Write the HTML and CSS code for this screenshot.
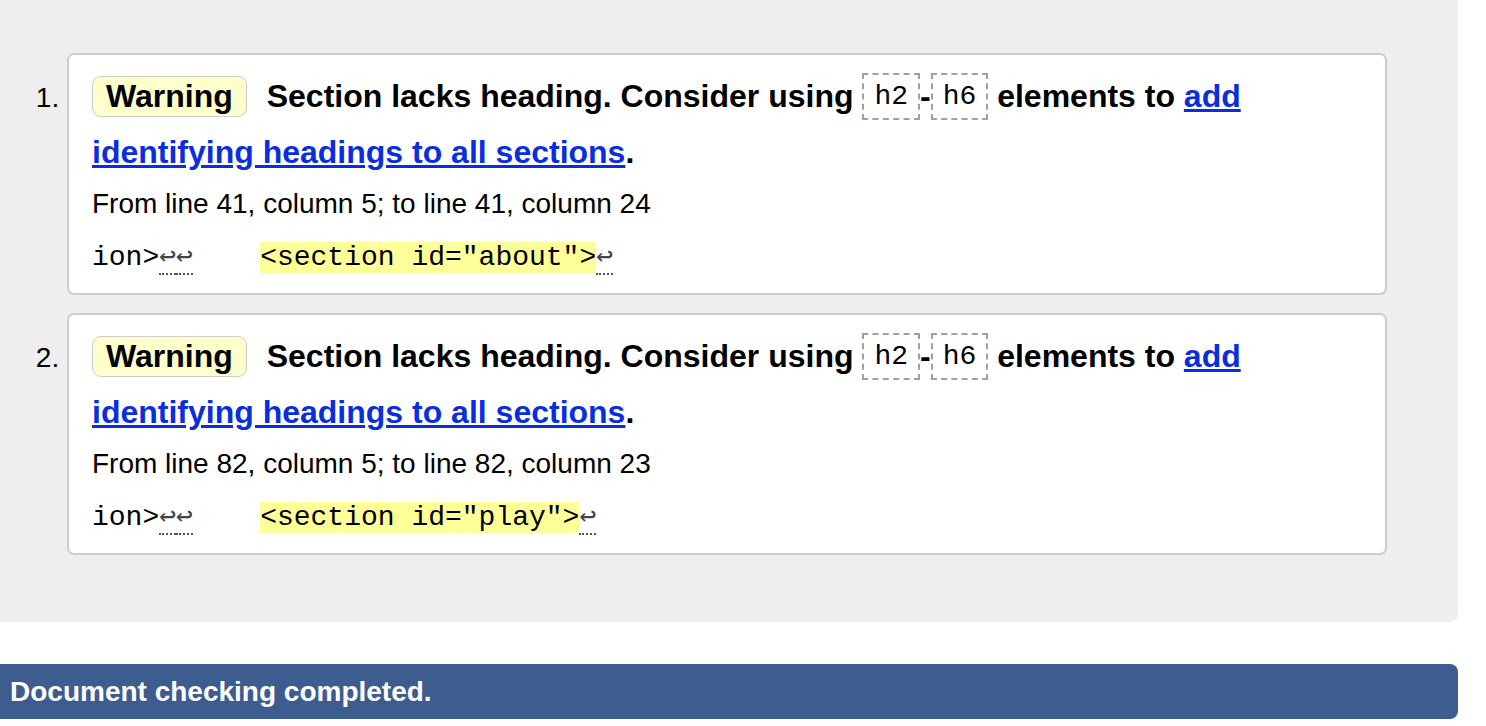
FILE: index.html
```html
<!DOCTYPE html>
<html lang="en">
<head>
<meta charset="utf-8">
<title>Nu Html Checker</title>
<link rel="stylesheet" href="styles.css">
</head>
<body>
<div class="results">
  <ol class="messages">
    <li class="warning">
      <p class="message"><strong class="badge">Warning</strong> <span>Section lacks heading. Consider using <code>h2</code>-<code>h6</code> elements to <a href="#">add identifying headings to all sections</a>.</span></p>
      <p class="location">From line 41, column 5; to line 41, column 24</p>
      <p class="extract"><code>ion&gt;<span class="lf">↩</span><span class="lf">↩</span>    <b>&lt;section id="about"&gt;</b><span class="lf">↩</span></code></p>
    </li>
    <li class="warning">
      <p class="message"><strong class="badge">Warning</strong> <span>Section lacks heading. Consider using <code>h2</code>-<code>h6</code> elements to <a href="#">add identifying headings to all sections</a>.</span></p>
      <p class="location">From line 82, column 5; to line 82, column 23</p>
      <p class="extract"><code>ion&gt;<span class="lf">↩</span><span class="lf">↩</span>    <b>&lt;section id="play"&gt;</b><span class="lf">↩</span></code></p>
    </li>
  </ol>
</div>
<p class="done">Document checking completed.</p>
</body>
</html>
```

FILE: styles.css
```css
html, body {
  margin: 0;
  padding: 0;
  background: #fff;
}

body {
  font-family: "Liberation Sans", Arial, sans-serif;
  color: #000;
}

.results {
  width: 1458px;
  background: #eeeeee;
  padding: 53px 0 67px;
  border-radius: 0 0 8px 0;
}

.messages {
  margin: 0;
  padding: 0 71px 0 67px;
  list-style: decimal outside;
  font-size: 28px;
}

.messages li {
  background: #fff;
  border: 2px solid #cccccc;
  border-radius: 7px;
  padding: 13px 23px;
}

.messages li + li {
  margin-top: 18px;
}

.message {
  margin: 0;
  font-size: 32px;
  font-weight: bold;
  line-height: 56px;
  height: 112px;
}

.badge {
  display: inline-block;
  line-height: 37px;
  padding: 1px 13px;
  margin-right: 11px;
  background: #ffffcc;
  border: 1px solid #cccccc;
  border-radius: 9px;
  vertical-align: baseline;
}

.message code {
  font-family: "Liberation Mono", "Courier New", monospace;
  font-weight: normal;
  font-size: 28px;
  line-height: 1;
  border: 2px dashed #a0a0a0;
  padding: 6px 10px;
  position: relative;
  top: -3px;
}

.message a {
  color: #0a2de0;
  text-decoration: underline;
}

.location {
  margin: 0;
  font-size: 28px;
  line-height: 48px;
  height: 48px;
}

.extract {
  margin: 4px 0 0;
  line-height: 48px;
  height: 48px;
}

.extract code {
  font-family: "Liberation Mono", "DejaVu Sans Mono", monospace;
  font-size: 28px;
  line-height: 1;
  white-space: pre;
}

.extract b {
  font-weight: normal;
  background: #ffff99;
}

.lf {
  color: #444;
  border-bottom: 2px dotted #555;
}

.done {
  box-sizing: border-box;
  width: 1458px;
  margin: 42px 0 0;
  padding: 0 10px;
  background: #3d5c8f;
  color: #fff;
  font-size: 28px;
  font-weight: bold;
  line-height: 55px;
  border-radius: 0 8px 8px 0;
}
```
